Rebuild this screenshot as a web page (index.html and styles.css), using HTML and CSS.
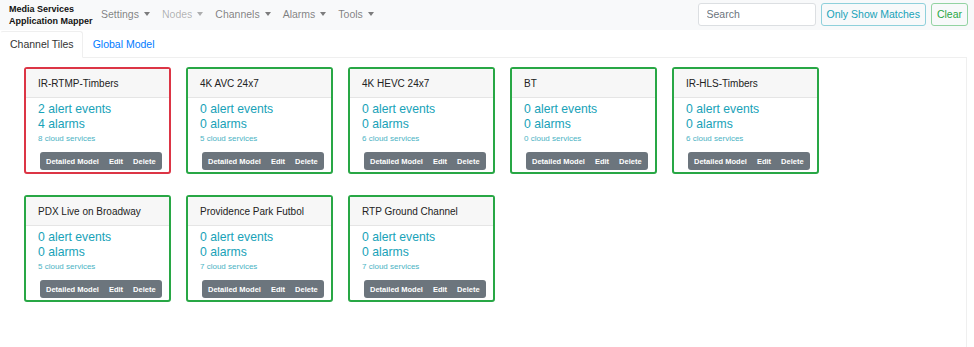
FILE: index.html
```html
<!DOCTYPE html>
<html lang="en">
<head>
    <meta charset="UTF-8">
    <title>Media Services Application Mapper</title>
    <link rel="stylesheet" href="styles.css">
</head>
<body>
    <nav class="navbar">
        <div class="brand">Media Services<br>Application Mapper</div>
        <ul class="menu">
            <li class="dropdown">Settings</li>
            <li class="dropdown disabled">Nodes</li>
            <li class="dropdown">Channels</li>
            <li class="dropdown">Alarms</li>
            <li class="dropdown">Tools</li>
        </ul>
        <form class="search-form">
            <input type="text" class="search-input" placeholder="Search">
            <button type="button" class="btn btn-info">Only Show Matches</button>
            <button type="button" class="btn btn-success">Clear</button>
        </form>
    </nav>

    <ul class="tabs">
        <li class="tab active">Channel Tiles</li>
        <li class="tab"><a href="#">Global Model</a></li>
    </ul>

    <div class="tab-content">
        <div class="tiles">
            <div class="tile alert">
                <div class="tile-header">IR-RTMP-Timbers</div>
                <div class="tile-body">
                    <div class="count">2 alert events</div>
                    <div class="count">4 alarms</div>
                    <div class="services">8 cloud services</div>
                    <div class="btn-group"><span>Detailed Model</span><span>Edit</span><span>Delete</span></div>
                </div>
            </div>
            <div class="tile">
                <div class="tile-header">4K AVC 24x7</div>
                <div class="tile-body">
                    <div class="count">0 alert events</div>
                    <div class="count">0 alarms</div>
                    <div class="services">5 cloud services</div>
                    <div class="btn-group"><span>Detailed Model</span><span>Edit</span><span>Delete</span></div>
                </div>
            </div>
            <div class="tile">
                <div class="tile-header">4K HEVC 24x7</div>
                <div class="tile-body">
                    <div class="count">0 alert events</div>
                    <div class="count">0 alarms</div>
                    <div class="services">6 cloud services</div>
                    <div class="btn-group"><span>Detailed Model</span><span>Edit</span><span>Delete</span></div>
                </div>
            </div>
            <div class="tile">
                <div class="tile-header">BT</div>
                <div class="tile-body">
                    <div class="count">0 alert events</div>
                    <div class="count">0 alarms</div>
                    <div class="services">0 cloud services</div>
                    <div class="btn-group"><span>Detailed Model</span><span>Edit</span><span>Delete</span></div>
                </div>
            </div>
            <div class="tile">
                <div class="tile-header">IR-HLS-Timbers</div>
                <div class="tile-body">
                    <div class="count">0 alert events</div>
                    <div class="count">0 alarms</div>
                    <div class="services">6 cloud services</div>
                    <div class="btn-group"><span>Detailed Model</span><span>Edit</span><span>Delete</span></div>
                </div>
            </div>
            <div class="tile">
                <div class="tile-header">PDX Live on Broadway</div>
                <div class="tile-body">
                    <div class="count">0 alert events</div>
                    <div class="count">0 alarms</div>
                    <div class="services">5 cloud services</div>
                    <div class="btn-group"><span>Detailed Model</span><span>Edit</span><span>Delete</span></div>
                </div>
            </div>
            <div class="tile">
                <div class="tile-header">Providence Park Futbol</div>
                <div class="tile-body">
                    <div class="count">0 alert events</div>
                    <div class="count">0 alarms</div>
                    <div class="services">7 cloud services</div>
                    <div class="btn-group"><span>Detailed Model</span><span>Edit</span><span>Delete</span></div>
                </div>
            </div>
            <div class="tile">
                <div class="tile-header">RTP Ground Channel</div>
                <div class="tile-body">
                    <div class="count">0 alert events</div>
                    <div class="count">0 alarms</div>
                    <div class="services">7 cloud services</div>
                    <div class="btn-group"><span>Detailed Model</span><span>Edit</span><span>Delete</span></div>
                </div>
            </div>
        </div>
    </div>
</body>
</html>
```

FILE: styles.css
```css
body {
    margin: 0;
    font-family: "Liberation Sans", Arial, sans-serif;
    color: #212529;
    background: #fff;
}

.navbar {
    display: flex;
    align-items: center;
    height: 30px;
    padding: 0 6px 0 9px;
    background: #f8f9fa;
}

.brand {
    font-size: 9px;
    font-weight: bold;
    line-height: 12px;
    color: #111;
    width: 87px;
}

.menu {
    display: flex;
    list-style: none;
    margin: 0 0 2px 0;
    padding: 0;
}

.dropdown {
    font-size: 10.5px;
    color: rgba(0, 0, 0, 0.5);
    padding: 0 5px;
    margin-right: 2px;
}

.dropdown::after {
    content: "";
    display: inline-block;
    margin-left: 5px;
    vertical-align: 2px;
    border-top: 4px solid;
    border-left: 3px solid transparent;
    border-right: 3px solid transparent;
}

.dropdown.disabled {
    color: rgba(0, 0, 0, 0.3);
}

.search-form {
    display: flex;
    align-items: center;
    gap: 5px;
    margin-left: auto;
    margin-bottom: 2px;
}

.search-input {
    width: 118px;
    height: 23px;
    box-sizing: border-box;
    padding: 0 8px;
    font-family: inherit;
    font-size: 10.5px;
    border: 1px solid #dcdfe2;
    border-radius: 3px;
    background: #fff;
}

.search-input::placeholder {
    color: #6c757d;
}

.btn {
    height: 23px;
    box-sizing: border-box;
    padding: 0 5px;
    font-family: inherit;
    font-size: 10.5px;
    background: transparent;
    border: 1px solid;
    border-radius: 3px;
}

.btn-info {
    color: #17a2b8;
    border-color: #8fd0db;
}

.btn-success {
    color: #28a745;
    border-color: #93d3a2;
}

.tabs {
    display: flex;
    list-style: none;
    margin: 0 7px 0 0;
    padding: 1px 0 0 0;
    border-bottom: 1px solid #efefef;
}

.tab {
    font-size: 10.5px;
    padding: 6px 8px 6px 9px;
    line-height: 13px;
    margin-bottom: -1px;
    border: 1px solid transparent;
    border-radius: 3px 3px 0 0;
}

.tab.active {
    border-color: #efefef #efefef #fff #fff;
    background: #fff;
    color: #333;
}

.tab a {
    color: #007bff;
    text-decoration: none;
}

.tab-content {
    border-right: 1px solid #efefef;
    margin-right: 7px;
    height: 290px;
}

.tiles {
    display: flex;
    flex-wrap: wrap;
    gap: 21px 15px;
    padding: 9px 0 0 24px;
    width: 820px;
}

.tile {
    width: 147px;
    box-sizing: border-box;
    border: 2px solid #28a745;
    border-radius: 3px;
}

.tile.alert {
    border-color: #dc3545;
}

.tile-header {
    height: 29px;
    box-sizing: border-box;
    padding: 8px 12px 0;
    font-size: 10px;
    line-height: 14px;
    background: #f7f7f7;
    border-bottom: 1px solid #e5e5e5;
    color: #222;
}

.tile-body {
    padding: 4px 12px 2px;
}

.count {
    font-size: 12.2px;
    line-height: 15px;
    color: #17a2b8;
}

.services {
    font-size: 8px;
    line-height: 13px;
    color: #4ab3c4;
}

.btn-group {
    display: inline-flex;
    margin: 7px 0 0 2px;
    height: 18px;
    align-items: center;
    background: #6c757d;
    border-radius: 3px;
    padding: 0 1px;
    white-space: nowrap;
}

.btn-group span {
    color: #fff;
    font-size: 7.5px;
    font-weight: bold;
    padding: 0 5px;
}
```
